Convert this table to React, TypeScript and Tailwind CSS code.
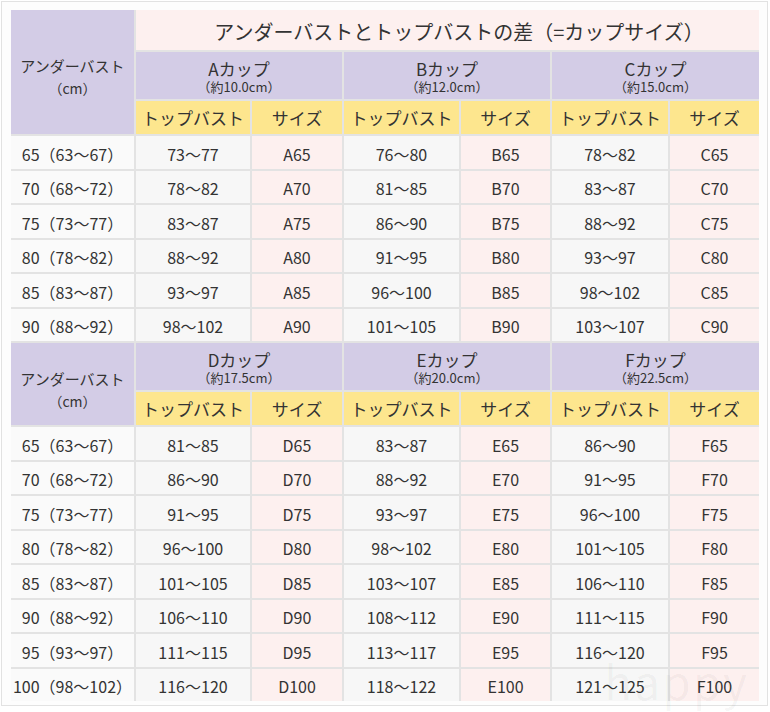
import React from "react";

type Cup = { name: string; diff: string; rows: [string, string][] };

const topCups: Cup[] = [
  {
    name: "Aカップ",
    diff: "（約10.0cm）",
    rows: [
      ["73〜77", "A65"],
      ["78〜82", "A70"],
      ["83〜87", "A75"],
      ["88〜92", "A80"],
      ["93〜97", "A85"],
      ["98〜102", "A90"],
    ],
  },
  {
    name: "Bカップ",
    diff: "（約12.0cm）",
    rows: [
      ["76〜80", "B65"],
      ["81〜85", "B70"],
      ["86〜90", "B75"],
      ["91〜95", "B80"],
      ["96〜100", "B85"],
      ["101〜105", "B90"],
    ],
  },
  {
    name: "Cカップ",
    diff: "（約15.0cm）",
    rows: [
      ["78〜82", "C65"],
      ["83〜87", "C70"],
      ["88〜92", "C75"],
      ["93〜97", "C80"],
      ["98〜102", "C85"],
      ["103〜107", "C90"],
    ],
  },
];

const bottomCups: Cup[] = [
  {
    name: "Dカップ",
    diff: "（約17.5cm）",
    rows: [
      ["81〜85", "D65"],
      ["86〜90", "D70"],
      ["91〜95", "D75"],
      ["96〜100", "D80"],
      ["101〜105", "D85"],
      ["106〜110", "D90"],
      ["111〜115", "D95"],
      ["116〜120", "D100"],
    ],
  },
  {
    name: "Eカップ",
    diff: "（約20.0cm）",
    rows: [
      ["83〜87", "E65"],
      ["88〜92", "E70"],
      ["93〜97", "E75"],
      ["98〜102", "E80"],
      ["103〜107", "E85"],
      ["108〜112", "E90"],
      ["113〜117", "E95"],
      ["118〜122", "E100"],
    ],
  },
  {
    name: "Fカップ",
    diff: "（約22.5cm）",
    rows: [
      ["86〜90", "F65"],
      ["91〜95", "F70"],
      ["96〜100", "F75"],
      ["101〜105", "F80"],
      ["106〜110", "F85"],
      ["111〜115", "F90"],
      ["116〜120", "F95"],
      ["121〜125", "F100"],
    ],
  },
];

const topUnder = [
  "65（63〜67）",
  "70（68〜72）",
  "75（73〜77）",
  "80（78〜82）",
  "85（83〜87）",
  "90（88〜92）",
];

const bottomUnder = [
  ...topUnder,
  "95（93〜97）",
  "100（98〜102）",
];

const CupHeader: React.FC<{ cup: Cup }> = ({ cup }) => (
  <div className="col-span-2 bg-[#d3cce6] flex flex-col items-center justify-center pt-[2px]">
    <span className="text-[17px] leading-[20px]">{cup.name}</span>
    <span className="text-[13px] leading-[15px]">{cup.diff}</span>
  </div>
);

const SubHeaders: React.FC = () => (
  <>
    {[0, 1, 2].map((i) => (
      <React.Fragment key={i}>
        <div className="bg-[#fde68e] flex items-center justify-center text-[17px] pt-[1px]">
          トップバスト
        </div>
        <div className="bg-[#fde68e] flex items-center justify-center text-[17px] pt-[1px]">
          サイズ
        </div>
      </React.Fragment>
    ))}
  </>
);

const DataRows: React.FC<{ under: string[]; cups: Cup[] }> = ({ under, cups }) => (
  <>
    {under.map((u, r) => (
      <React.Fragment key={u}>
        <div className="bg-[#fafafa] flex items-center justify-center text-[16px] pt-[3px]">
          {u}
        </div>
        {cups.map((c) => (
          <React.Fragment key={c.name}>
            <div className="bg-[#f7f7f7] flex items-center justify-center text-[16px] pt-[3px]">
              {c.rows[r][0]}
            </div>
            <div className="bg-[#fdf0ef] flex items-center justify-center text-[16px] pt-[3px]">
              {c.rows[r][1]}
            </div>
          </React.Fragment>
        ))}
      </React.Fragment>
    ))}
  </>
);

const App: React.FC = () => {
  return (
    <div
      className="w-[770px] h-[712px] bg-white pl-[1px] pt-[1px] text-[#333]"
      style={{ fontFamily: '"Noto Sans CJK JP", "Noto Sans", sans-serif' }}
    >
      <div className="relative w-[767px] h-[705px] border border-[#e2e2e2] bg-[#fdfdfd] pl-[9px] pt-[8px]">
        <div className="grid grid-cols-[123px_114px_90px_115px_89px_116px_89px] grid-rows-[40px_47px_33px_repeat(6,32.5px)_47px_33px_repeat(8,32.5px)] gap-[2px] w-[748px] bg-[#e3e3e3]">
          {/* upper block */}
          <div className="row-span-3 bg-[#d3cce6] flex flex-col items-center justify-center pt-[10px]">
            <span className="text-[15px] leading-[22px]">アンダーバスト</span>
            <span className="text-[14px] leading-[22px]">（cm）</span>
          </div>
          <div className="col-span-6 bg-[#fdf0ef] flex items-center justify-center text-[20px] pt-[4px] pl-[23px]">
            アンダーバストとトップバストの差（=カップサイズ）
          </div>
          {topCups.map((c) => (
            <CupHeader key={c.name} cup={c} />
          ))}
          <SubHeaders />
          <DataRows under={topUnder} cups={topCups} />

          {/* lower block */}
          <div className="row-span-2 bg-[#d3cce6] flex flex-col items-center justify-center pt-[12px]">
            <span className="text-[15px] leading-[22px]">アンダーバスト</span>
            <span className="text-[14px] leading-[22px]">（cm）</span>
          </div>
          {bottomCups.map((c) => (
            <CupHeader key={c.name} cup={c} />
          ))}
          <SubHeaders />
          <DataRows under={bottomUnder} cups={bottomCups} />
        </div>

        {/* watermark */}
        <div className="absolute right-[18px] bottom-[2px] text-[46px] leading-none tracking-[2px] text-black/[0.04] pointer-events-none select-none">
          happy
        </div>
      </div>
    </div>
  );
};

export default App;
